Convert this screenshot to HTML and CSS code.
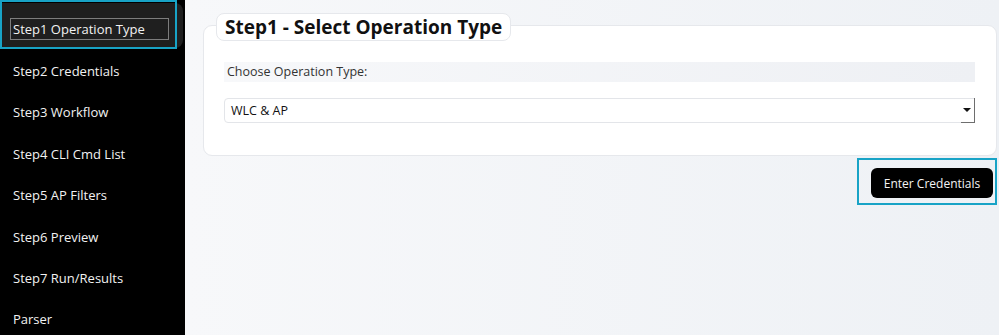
FILE: index.html
```html
<!DOCTYPE html>
<html lang="en">
<head>
<meta charset="utf-8">
<title>Step1 Operation Type</title>
<link rel="stylesheet" href="styles.css">
</head>
<body>
<div class="app">
  <nav class="sidebar">
    <div class="nav-item active">
      <span class="focus-ring"></span>
      <span class="nav-inner">Step1 Operation Type</span>
    </div>
    <div class="nav-item">Step2 Credentials</div>
    <div class="nav-item">Step3 Workflow</div>
    <div class="nav-item">Step4 CLI Cmd List</div>
    <div class="nav-item">Step5 AP Filters</div>
    <div class="nav-item">Step6 Preview</div>
    <div class="nav-item">Step7 Run/Results</div>
    <div class="nav-item">Parser</div>
  </nav>
  <main class="main">
    <section class="card">
      <h2 class="card-title">Step1 - Select Operation Type</h2>
      <div class="field-label">Choose Operation Type:</div>
      <div class="select">
        <span class="select-value">WLC &amp; AP</span>
        <span class="select-arrow"></span>
      </div>
    </section>
    <div class="actions">
      <div class="btn-focus">
        <button class="btn" type="button">Enter Credentials</button>
      </div>
    </div>
  </main>
</div>
</body>
</html>
```
FILE: styles.css
```css
* { box-sizing: border-box; }
html, body { margin: 0; padding: 0; height: 100%; }
body {
  font-family: "Open Sans", "Noto Sans", "Liberation Sans", sans-serif;
  font-size: 13px;
  color: #111;
  overflow: hidden;
}
.app {
  display: flex;
  height: 335px;
}
.sidebar {
  width: 185px;
  flex: none;
  background: #000;
  color: #f2f2f2;
  padding-top: 3px;
}
.nav-item {
  height: 41.4px;
  padding: 13px 0 0 13px;
  line-height: 20px;
  white-space: nowrap;
}
.nav-item.active {
  position: relative;
  width: 183px;
  height: 45px;
  padding: 15px 0 0 10px;
  background: #1f1f1f;
  border-radius: 0 8px 8px 0;
}
.focus-ring {
  position: absolute;
  left: 0;
  top: -3px;
  width: 177px;
  height: 49px;
  border: 2px solid #18a3c6;
}
.nav-inner {
  display: inline-block;
  width: 159px;
  height: 22px;
  padding: 0 2px;
  border: 1px solid #7d7d7d;
  line-height: 20px;
}
.main {
  flex: 1;
  padding: 13px 2px 0 18px;
  background: linear-gradient(90deg, #f7f8fa 0%, #eef1f5 100%);
}
.card {
  margin-top: 12px;
  background: #fff;
  border: 1px solid #e6e8ec;
  border-radius: 9px;
  padding: 0 21px 32px 20px;
}
.card-title {
  display: block;
  width: fit-content;
  margin: -13px 0 0 -8px;
  padding: 0 8px;
  height: 28px;
  line-height: 26px;
  font-size: 19px;
  font-weight: 700;
  color: #111;
  background: #fff;
  border: 1px solid #e6e8ec;
  border-radius: 8px;
}
.field-label {
  margin-top: 21px;
  height: 20px;
  line-height: 20px;
  padding-left: 3px;
  font-size: 12.5px;
  color: #333;
  background: linear-gradient(90deg, #f7f8fa 0%, #eef0f4 100%);
}
.select {
  position: relative;
  display: flex;
  align-items: center;
  margin-top: 16px;
  height: 25px;
  padding-left: 6px;
  border: 1px solid #e3e5e9;
  border-radius: 4px 0 0 4px;
  background: #fff;
  color: #111;
  font-size: 12.5px;
}
.select-arrow {
  position: absolute;
  right: -1px;
  bottom: -1px;
  width: 14px;
  height: 25px;
  border-right: 1px solid #6e6e6e;
  border-bottom: 1px solid #6e6e6e;
}
.select-arrow::after {
  content: "";
  position: absolute;
  right: 3px;
  top: 10px;
  border-left: 4px solid transparent;
  border-right: 4px solid transparent;
  border-top: 4px solid #111;
}
.actions {
  display: flex;
  justify-content: flex-end;
  margin-top: 2px;
}
.btn-focus {
  border: 2px solid #18a3c6;
  padding: 8px 2px 5px 12px;
}
.btn {
  display: block;
  width: 122px;
  height: 30px;
  padding: 0;
  border: none;
  border-radius: 6px;
  background: #000;
  color: #f4f4f4;
  font-family: inherit;
  font-size: 12px;
}
```
